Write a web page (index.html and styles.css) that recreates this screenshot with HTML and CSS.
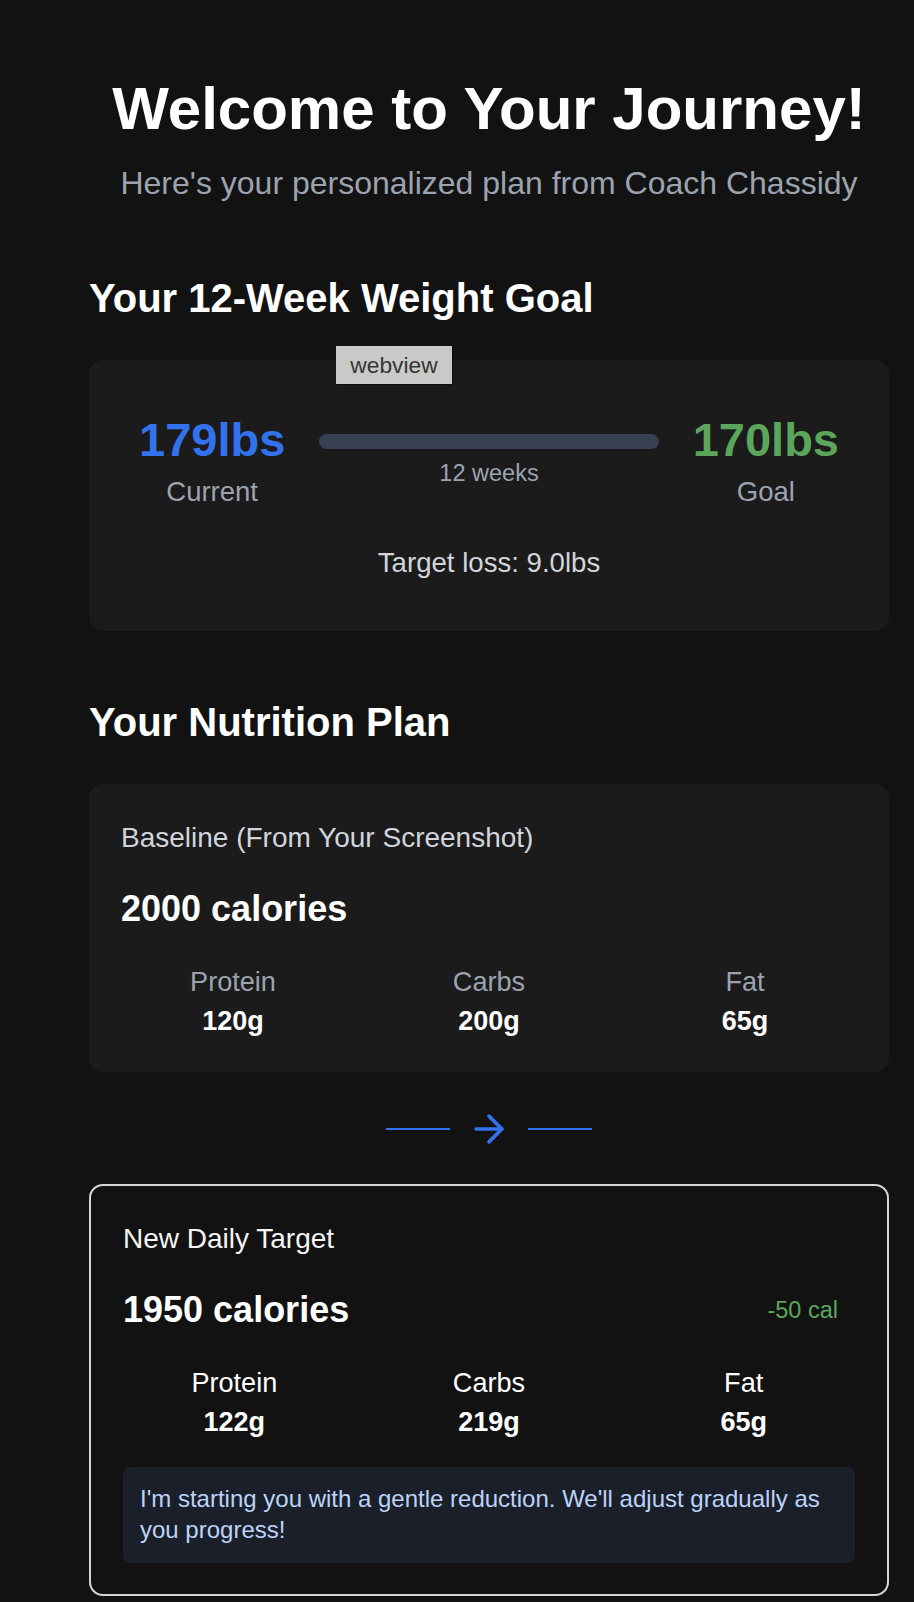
FILE: index.html
```html
<!DOCTYPE html>
<html lang="en">
<head>
<meta charset="utf-8">
<title>Your Journey</title>
<link rel="stylesheet" href="styles.css">
</head>
<body>
<main class="page">
  <header class="hero">
    <h1 class="hero-title">Welcome to Your Journey!</h1>
    <p class="hero-sub">Here's your personalized plan from Coach Chassidy</p>
  </header>

  <section class="section section-goal">
    <h2 class="section-title">Your 12-Week Weight Goal</h2>
    <div class="card goal-card">
      <div class="goal-row">
        <div class="goal-col">
          <div class="goal-value current">179lbs</div>
          <div class="goal-label">Current</div>
        </div>
        <div class="goal-track">
          <div class="track-bar"></div>
          <div class="track-label">12 weeks</div>
        </div>
        <div class="goal-col">
          <div class="goal-value target">170lbs</div>
          <div class="goal-label">Goal</div>
        </div>
      </div>
      <div class="goal-loss">Target loss: 9.0lbs</div>
    </div>
  </section>

  <section class="section section-nutrition">
    <h2 class="section-title">Your Nutrition Plan</h2>
    <div class="card base-card">
      <div class="plan-label">Baseline (From Your Screenshot)</div>
      <div class="plan-head">
        <div class="plan-cal">2000 calories</div>
      </div>
      <div class="macros">
        <div class="macro">
          <div class="macro-label">Protein</div>
          <div class="macro-value">120g</div>
        </div>
        <div class="macro">
          <div class="macro-label">Carbs</div>
          <div class="macro-value">200g</div>
        </div>
        <div class="macro">
          <div class="macro-label">Fat</div>
          <div class="macro-value">65g</div>
        </div>
      </div>
    </div>

    <div class="transition">
      <span class="transition-line"></span>
      <svg class="transition-arrow" viewBox="0 0 24 24" fill="none" stroke="currentColor" stroke-width="2" stroke-linecap="round" stroke-linejoin="round" aria-hidden="true">
        <path d="M5 12h14"/>
        <path d="m12 5 7 7-7 7"/>
      </svg>
      <span class="transition-line"></span>
    </div>

    <div class="card new-card">
      <div class="plan-label plan-label-light">New Daily Target</div>
      <div class="plan-head">
        <div class="plan-cal">1950 calories</div>
        <div class="cal-diff">-50 cal</div>
      </div>
      <div class="macros">
        <div class="macro">
          <div class="macro-label macro-label-light">Protein</div>
          <div class="macro-value">122g</div>
        </div>
        <div class="macro">
          <div class="macro-label macro-label-light">Carbs</div>
          <div class="macro-value">219g</div>
        </div>
        <div class="macro">
          <div class="macro-label macro-label-light">Fat</div>
          <div class="macro-value">65g</div>
        </div>
      </div>
      <div class="note">I'm starting you with a gentle reduction. We'll adjust gradually as you progress!</div>
    </div>
  </section>
</main>
<div class="tooltip">webview</div>
</body>
</html>
```

FILE: styles.css
```css
* {
  box-sizing: border-box;
}

html,
body {
  margin: 0;
  padding: 0;
}

body {
  background: #121212;
  color: #ffffff;
  font-family: "Liberation Sans", Arial, Helvetica, sans-serif;
  position: relative;
  min-height: 1602px;
}

.page {
  width: 800px;
  margin-left: 89px;
  padding-top: 73px;
}

/* Hero */
.hero {
  text-align: center;
}

.hero-title {
  margin: 0;
  font-size: 60px;
  line-height: 71px;
  font-weight: 700;
  color: #ffffff;
}

.hero-sub {
  margin: 19px 0 0;
  font-size: 32px;
  line-height: 40px;
  color: #9ca3af;
}

/* Sections */
.section-goal {
  margin-top: 72px;
}

.section-nutrition {
  margin-top: 68px;
}

.section-title {
  margin: 0 0 38px;
  font-size: 40px;
  line-height: 47px;
  font-weight: 700;
  color: #ffffff;
}

.card {
  background: #1b1b1b;
  border-radius: 14px;
}

/* Goal card */
.goal-card {
  padding: 52px 50px 51px;
}

.goal-row {
  display: flex;
  align-items: center;
}

.goal-col {
  text-align: center;
}

.goal-value {
  font-size: 47px;
  line-height: 56px;
  font-weight: 700;
}

.goal-value.current {
  color: #3272ed;
}

.goal-value.target {
  color: #5ca65c;
}

.goal-label {
  margin-top: 7px;
  font-size: 27.5px;
  line-height: 34px;
  color: #9ca3af;
}

.goal-track {
  flex: 1;
  margin: 0 34px;
  text-align: center;
}

.track-bar {
  height: 15px;
  border-radius: 8px;
  background: #374151;
}

.track-label {
  margin-top: 9px;
  font-size: 23.5px;
  line-height: 30px;
  color: #9ca3af;
}

.goal-loss {
  margin-top: 37px;
  text-align: center;
  font-size: 27.6px;
  line-height: 34px;
  color: #d1d5db;
}

/* Nutrition cards */
.base-card {
  padding: 37px 32px 34px;
}

.new-card {
  background: transparent;
  border: 2px solid #d6d6d6;
  padding: 36px 32px 31px;
}

.plan-label {
  font-size: 28px;
  line-height: 34px;
  color: #d1d5db;
}

.plan-label-light {
  color: #f5f5f5;
}

.plan-head {
  margin-top: 32.5px;
  display: flex;
  justify-content: space-between;
  align-items: center;
}

.plan-cal {
  font-size: 36px;
  line-height: 42px;
  font-weight: 700;
  color: #ffffff;
}

.cal-diff {
  padding-right: 17px;
  font-size: 23.5px;
  line-height: 30px;
  color: #5ca65c;
}

.macros {
  margin-top: 35px;
  display: grid;
  grid-template-columns: repeat(3, 1fr);
  gap: 32px;
  text-align: center;
}

.macro-label {
  font-size: 27.1px;
  line-height: 34px;
  color: #9ca3af;
}

.macro-label-light {
  color: #ffffff;
}

.macro-value {
  margin-top: 5.5px;
  font-size: 27px;
  line-height: 34px;
  font-weight: 700;
  color: #ffffff;
}

.note {
  margin-top: 27.5px;
  padding: 16px 17px 17px;
  background: #1b1f2a;
  border-radius: 7px;
  font-size: 24px;
  line-height: 31.7px;
  color: #bcd3f7;
}

/* Transition arrow */
.transition {
  margin: 35px 0 33px;
  display: flex;
  justify-content: center;
  align-items: center;
  gap: 17px;
  color: #3272ed;
}

.transition-line {
  width: 64px;
  height: 2px;
  background: #3272ed;
}

.transition-arrow {
  width: 44px;
  height: 44px;
  display: block;
}

/* Overlay tooltip */
.tooltip {
  position: absolute;
  left: 336px;
  top: 346px;
  width: 116px;
  height: 38px;
  background: #c9c9c7;
  color: #363636;
  font-size: 22.8px;
  line-height: 38px;
  text-align: center;
  box-shadow: 1px 1px 1px rgba(0, 0, 0, 0.45);
}
```
